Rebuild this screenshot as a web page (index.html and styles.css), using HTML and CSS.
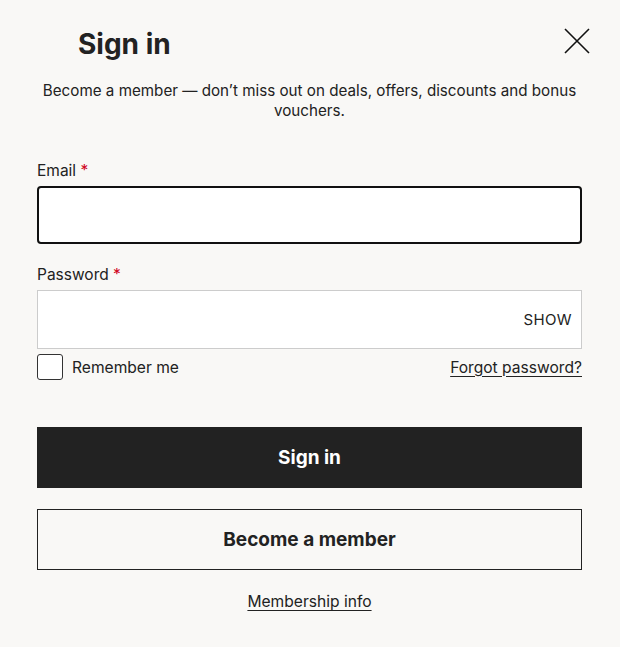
FILE: index.html
```html
<!DOCTYPE html>
<html lang="en">
<head>
<meta charset="utf-8">
<link rel="stylesheet" href="styles.css">
<title>Sign in</title>
</head>
<body>
<div class="panel">
  <header class="head">
    <h1 class="title">Sign in</h1>
    <button class="close" aria-label="Close">
      <svg width="26" height="26" viewBox="0 0 26 26"><path d="M1 1L25 25M25 1L1 25" stroke="#111" stroke-width="1.6" fill="none"/></svg>
    </button>
  </header>
  <p class="intro">Become a member — don’t miss out on deals, offers, discounts and bonus vouchers.</p>
  <form class="form">
    <label class="label">Email <span class="req">*</span></label>
    <input class="input input-focus" type="email">
    <label class="label label-pw">Password <span class="req">*</span></label>
    <div class="pw">
      <input class="input input-pw" type="password">
      <span class="show">SHOW</span>
    </div>
    <div class="row">
      <label class="check"><span class="box"></span>Remember me</label>
      <a class="link" href="#">Forgot password?</a>
    </div>
    <button class="btn btn-dark" type="button">Sign in</button>
    <button class="btn btn-light" type="button">Become a member</button>
    <div class="info"><a class="link" href="#">Membership info</a></div>
  </form>
</div>
</body>
</html>
```
FILE: styles.css
```css
* { box-sizing: border-box; }
html, body { margin: 0; background: #f9f8f6; }
body { font-family: "Inter", "Noto Sans", sans-serif; color: #222; }
.panel { width: 620px; height: 647px; padding: 0 38px 0 37px; }
.head { display: flex; justify-content: space-between; align-items: flex-start; padding-top: 26px; }
.title { margin: 1px 0 0 41px; font-size: 28px; font-weight: 700; line-height: 34px; color: #222; }
.close { background: none; border: 0; padding: 0; margin: 2px -8px 0 0; width: 26px; height: 26px; }
.close svg { display: block; }
.intro { margin: 20px 0 0; text-align: center; font-size: 15.2px; line-height: 20px; }
.form { display: flex; flex-direction: column; margin-top: 40px; }
.label { font-size: 15.5px; line-height: 20px; margin-bottom: 5px; }
.label-pw { margin-top: 21px; }
.req { color: #d0021b; }
.input { width: 100%; height: 58px; background: #fff; border: 2px solid #111; border-radius: 4px; font: inherit; }
.pw { position: relative; }
.input-pw { border: 1px solid #ccc; border-radius: 0; height: 59px; display: block; }
.show { position: absolute; right: 10px; top: 21px; font-size: 15px; line-height: 18px; letter-spacing: 0.4px; }
.row { display: flex; justify-content: space-between; align-items: center; margin-top: 5px; }
.check { display: flex; align-items: center; gap: 9px; font-size: 15.6px; }
.box { width: 26px; height: 26px; border: 1px solid #333; border-radius: 3px; background: #fff; }
.link { color: #222; font-size: 15.6px; text-decoration: underline; text-underline-offset: 3px; }
.btn { height: 61px; width: 100%; font-family: inherit; font-size: 19px; font-weight: 700; cursor: pointer; }
.btn-dark { margin-top: 47px; background: #222; color: #fff; border: 0; }
.btn-light { margin-top: 21px; background: transparent; color: #222; border: 1px solid #222; }
.info { text-align: center; margin-top: 21px; }
```
